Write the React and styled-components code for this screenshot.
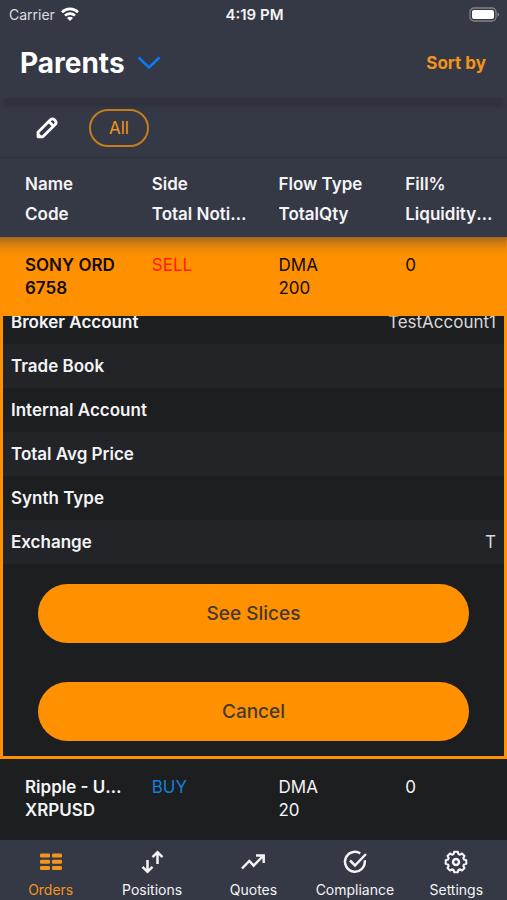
import React, { useState, useEffect, useRef } from 'react';
import styled, { createGlobalStyle } from 'styled-components';

const GlobalStyle = createGlobalStyle`
  * {
    box-sizing: border-box;
  }

  body {
    margin: 0;
    background-color: #1c1e1f;
    color: #f4f4f6;
    font-family: Inter, "Liberation Sans", sans-serif;
    font-size: 17px;
  }

  button {
    font-family: inherit;
    cursor: pointer;
  }
`;

const Screen = styled.div`
  display: flex;
  flex-direction: column;
  height: 100vh;
`;

const StatusBar = styled.div`
  display: grid;
  grid-template-columns: 1fr auto 1fr;
  align-items: center;
  height: 28px;
  padding: 0 7px 0 9px;
  background-color: #353945;
  font-size: 15px;
`;

const Carrier = styled.span`
  display: flex;
  align-items: center;
  gap: 6px;
  color: #dcdde1;
  font-size: 14px;
`;

const Clock = styled.span`
  font-weight: 600;
`;

const Battery = styled.svg`
  justify-self: end;
`;

const Header = styled.header`
  position: relative;
  display: flex;
  align-items: center;
  justify-content: space-between;
  height: 70px;
  padding: 0 21px 0 20px;
  background-color: #353945;
  box-shadow: 0 13px 3px -4px #30333e;
`;

const TitleButton = styled.button`
  display: flex;
  align-items: center;
  gap: 12px;
  padding: 0;
  border: none;
  background: none;
  color: white;
  font-size: 28px;
  font-weight: 700;
`;

const SortButton = styled.button`
  padding: 0;
  border: none;
  background: none;
  color: #f3941c;
  font-size: 17px;
  font-weight: 700;
`;

const FilterBar = styled.div`
  display: flex;
  align-items: center;
  gap: 29px;
  height: 60px;
  padding: 0 34px;
  background-color: #353945;
  border-bottom: 1px solid #2f323d;
`;

const IconButton = styled.button`
  display: flex;
  padding: 0;
  border: none;
  background: none;
  color: white;
`;

const Chip = styled.button`
  width: 60px;
  height: 38px;
  border: 2px solid #c77d1d;
  border-radius: 19px;
  background: none;
  color: #f3941c;
  font-size: 17px;
`;

const ListArea = styled.main`
  flex: 1;
  min-height: 0;
  overflow-y: auto;
  scrollbar-width: none;
`;

const OrdersTable = styled.table`
  width: 100%;
  table-layout: fixed;
  border-collapse: collapse;
`;

const HeadRow = styled.tr`
  height: 79px;
  background-color: #353945;
`;

const OrderRow = styled.tr`
  height: 79px;
  background-color: ${({ $open }) => ($open ? '#ff9100' : '#1c1e1f')};
  background-image: ${({ $open }) =>
    $open ? 'linear-gradient(#a0671f, #c87914 5px, #ee8a06 12px, #ff9100 20px)' : 'none'};
  color: ${({ $open }) => ($open ? '#120c00' : '#f4f4f6')};
`;

const HeadCell = styled.th`
  padding: 2px 2px 0 25px;
  text-align: left;
  font-weight: 600;
  line-height: 30px;
`;

const Cell = styled.td`
  padding: 17px 2px 0 25px;
  vertical-align: top;
  line-height: 23px;
  color: ${({ $side }) => ($side === 'SELL' ? '#ff1d0d' : $side === 'BUY' ? '#127fd6' : 'inherit')};
  font-weight: ${({ $bold }) => ($bold ? 600 : 400)};
`;

const Line = styled.div`
  overflow: hidden;
  white-space: nowrap;
  text-overflow: ellipsis;
`;

const DetailCell = styled.td`
  padding: 0;
`;

const DetailPanel = styled.div`
  height: 443px;
  overflow-y: auto;
  scrollbar-width: none;
  border: 3px solid #ff9100;
  border-top: none;
`;

const DetailList = styled.dl`
  margin: 0;
`;

const DetailItem = styled.div`
  display: flex;
  align-items: center;
  justify-content: space-between;
  height: 44px;
  padding: 0 8px;

  &:nth-child(even) {
    background-color: #222427;
  }
`;

const DetailLabel = styled.dt`
  font-weight: 600;
`;

const DetailValue = styled.dd`
  margin: 0;
  color: #d8d8da;
`;

const Actions = styled.div`
  display: flex;
  flex-direction: column;
  gap: 39px;
  padding: 20px 35px 15px;
`;

const ActionButton = styled.button`
  height: 59px;
  border: none;
  border-radius: 30px;
  background-color: #ff9100;
  color: #463a2b;
  font-size: 19px;
  font-weight: 500;
`;

const TabBar = styled.nav`
  display: grid;
  grid-template-columns: repeat(5, 1fr);
  height: 60px;
  background-color: #353945;
`;

const Tab = styled.a`
  display: flex;
  flex-direction: column;
  align-items: center;
  gap: 6px;
  padding-top: 10px;
  color: ${({ $active }) => ($active ? '#f3941c' : '#f4f4f6')};
  font-size: 14px;
  line-height: 20px;
  text-decoration: none;
`;

const columns = [
  ['Name', 'Code'],
  ['Side', 'Total Notional'],
  ['Flow Type', 'TotalQty'],
  ['Fill%', 'LiquidityMode'],
];

const orders = [
  { name: 'SONY ORD', code: '6758', side: 'SELL', flow: 'DMA', qty: 200, fill: 0 },
  { name: 'Ripple - USD', code: 'XRPUSD', side: 'BUY', flow: 'DMA', qty: 20, fill: 0 },
];

const details = [
  { label: 'Broker Account', value: 'TestAccount1' },
  { label: 'Trade Book', value: '' },
  { label: 'Internal Account', value: '' },
  { label: 'Total Avg Price', value: '' },
  { label: 'Synth Type', value: '' },
  { label: 'Exchange', value: 'T' },
];

const WifiIcon = () => (
  <svg width="18" height="14" viewBox="0 0 18 14" fill="none" stroke="white" strokeWidth="2.6" aria-hidden="true">
    <path d="M1 5.2a11.4 11.4 0 0 1 16 0" />
    <path d="M4 8.6a7.2 7.2 0 0 1 10 0" />
    <path d="M9 14 6 11a4.2 4.2 0 0 1 6 0z" fill="white" stroke="none" />
  </svg>
);

const BatteryIcon = () => (
  <Battery width="31" height="15" viewBox="0 0 31 15" aria-hidden="true">
    <rect x="1" y="1" width="26" height="13" rx="4" fill="none" stroke="#81848c" strokeWidth="1.3" />
    <rect x="3" y="3" width="22" height="9" rx="2" fill="white" />
    <path d="M28.5 5.2v4.6q1.7-.7 1.7-2.3t-1.7-2.3z" fill="#81848c" />
  </Battery>
);

const ChevronIcon = () => (
  <svg width="24" height="14" viewBox="0 0 24 14" fill="none" stroke="#0a7af0" strokeWidth="2.6" aria-hidden="true">
    <path d="M1.5 1.5 12 11.5 22.5 1.5" />
  </svg>
);

const PencilIcon = () => (
  <svg width="26" height="26" viewBox="0 0 26 26" fill="none" stroke="currentColor" strokeWidth="2.8" strokeLinejoin="round" aria-hidden="true">
    <path d="M4 21.8v-4.6L16.4 4.8q2-1.8 4 0l.8.8q1.8 2 0 4L8.8 21.8z" />
    <path d="m14.8 6.4 4.8 4.8" />
    <path d="M4 17.5v4.3h4.4z" fill="currentColor" stroke="none" />
  </svg>
);

const OrdersIcon = () => (
  <svg width="24" height="24" viewBox="0 0 24 24" fill="currentColor" aria-hidden="true">
    <rect x="1" y="3.5" width="10" height="4" rx="1.2" />
    <rect x="13" y="3.5" width="10" height="4" rx="1.2" />
    <rect x="1" y="9.7" width="10" height="4" rx="1.2" />
    <rect x="13" y="9.7" width="10" height="4" rx="1.2" />
    <rect x="1" y="16" width="10" height="4" rx="1.2" />
    <rect x="13" y="16" width="10" height="4" rx="1.2" />
  </svg>
);

const LineIcon = ({ children }) => (
  <svg width="24" height="24" viewBox="0 0 24 24" fill="none" stroke="currentColor" strokeWidth="2.5" aria-hidden="true">
    {children}
  </svg>
);

const PositionsIcon = () => (
  <LineIcon>
    <path d="M7.5 10v11M2.5 16.8l5 5 5-5M17.5 14V3M12.5 7.2l5-5 5 5" />
  </LineIcon>
);

const QuotesIcon = () => (
  <LineIcon>
    <path d="m1 18.5 7.3-7.5 4.4 4.6L22 6M15 5.5h7.7V13" />
  </LineIcon>
);

const ComplianceIcon = () => (
  <LineIcon>
    <path d="M21.7 10.2A9.9 9.9 0 1 1 17.2 3.4" />
    <path d="m7 10.5 5 5L23 4" />
  </LineIcon>
);

const SettingsIcon = () => (
  <LineIcon>
    <path
      transform="translate(12 12)"
      strokeWidth="2.1"
      strokeLinejoin="round"
      d="M10.3 1.8 8 2.4 7.3 4 8.5 6 6 8.5 4 7.3 2.4 8 1.800 10.300H-1.800L-2.400 8-4 7.300-6 8.500-8.500 6-7.300 4-8 2.400-10.300 1.800V-1.800L-8-2.400-7.300-4-8.500-6-6-8.500-4-7.300-2.400-8-1.800-10.300H1.800L2.400-8 4-7.300 6-8.500 8.500-6 7.300-4 8-2.400 10.300-1.800z"
    />
    <circle cx="12" cy="12" r="3" />
  </LineIcon>
);

const tabs = [
  { label: 'Orders', Icon: OrdersIcon },
  { label: 'Positions', Icon: PositionsIcon },
  { label: 'Quotes', Icon: QuotesIcon },
  { label: 'Compliance', Icon: ComplianceIcon },
  { label: 'Settings', Icon: SettingsIcon },
];

const OrderDetails = () => {
  const panelRef = useRef(null);

  // open the panel at its end, so that the actions are in view
  useEffect(() => {
    panelRef.current.scrollTop = panelRef.current.scrollHeight;
  }, []);

  return (
    <tr>
      <DetailCell colSpan={4}>
        <DetailPanel ref={panelRef}>
          <DetailList>
            {details.map((item) => (
              <DetailItem key={item.label}>
                <DetailLabel>{item.label}</DetailLabel>
                <DetailValue>{item.value}</DetailValue>
              </DetailItem>
            ))}
          </DetailList>
          <Actions>
            <ActionButton>See Slices</ActionButton>
            <ActionButton>Cancel</ActionButton>
          </Actions>
        </DetailPanel>
      </DetailCell>
    </tr>
  );
};

export default function App() {
  const [openCode, setOpenCode] = useState('6758');

  return (
    <Screen>
      <GlobalStyle />
      <StatusBar>
        <Carrier>
          Carrier <WifiIcon />
        </Carrier>
        <Clock>4:19 PM</Clock>
        <BatteryIcon />
      </StatusBar>
      <Header>
        <TitleButton>
          Parents <ChevronIcon />
        </TitleButton>
        <SortButton>Sort by</SortButton>
      </Header>
      <FilterBar>
        <IconButton aria-label="Edit">
          <PencilIcon />
        </IconButton>
        <Chip>All</Chip>
      </FilterBar>

      <ListArea>
        <OrdersTable>
          <thead>
            <HeadRow>
              {columns.map(([top, bottom]) => (
                <HeadCell key={top} scope="col">
                  <Line>{top}</Line>
                  <Line>{bottom}</Line>
                </HeadCell>
              ))}
            </HeadRow>
          </thead>
          <tbody>
            {orders.map((order) => {
              const open = order.code === openCode;
              return (
                <React.Fragment key={order.code}>
                  <OrderRow $open={open} onClick={() => setOpenCode(open ? null : order.code)}>
                    <Cell $bold>
                      <Line>{order.name}</Line>
                      <Line>{order.code}</Line>
                    </Cell>
                    <Cell $side={order.side}>{order.side}</Cell>
                    <Cell>
                      <Line>{order.flow}</Line>
                      <Line>{order.qty}</Line>
                    </Cell>
                    <Cell>{order.fill}</Cell>
                  </OrderRow>
                  {open && <OrderDetails />}
                </React.Fragment>
              );
            })}
          </tbody>
        </OrdersTable>
      </ListArea>

      <TabBar>
        {tabs.map(({ label, Icon }) => (
          <Tab key={label} href={`#${label.toLowerCase()}`} $active={label === 'Orders'}>
            <Icon />
            {label}
          </Tab>
        ))}
      </TabBar>
    </Screen>
  );
}
